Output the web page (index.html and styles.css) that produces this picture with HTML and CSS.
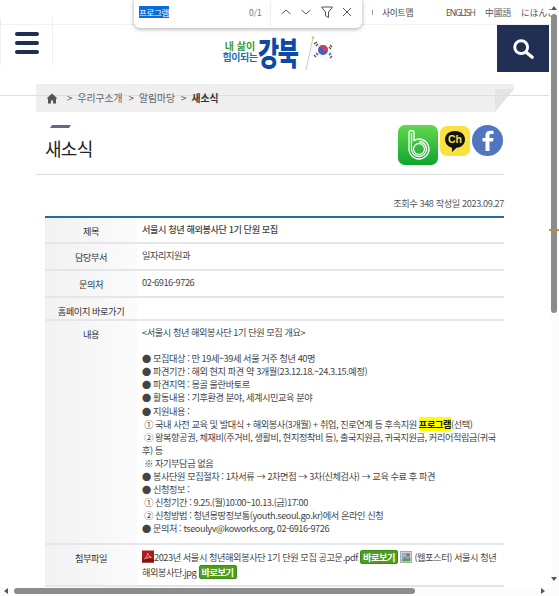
FILE: index.html
```html
<!DOCTYPE html>
<html lang="ko">
<head>
<meta charset="utf-8">
<title>새소식</title>
<link rel="stylesheet" href="styles.css">
</head>
<body>
<div class="page">
  <div class="topbar">
    <div class="topnav">
      <span class="sep"></span>
      <span class="sitemap">사이트맵</span>
      <span class="lang eng">ENGLISH</span>
      <span class="lang">中國語</span>
      <span class="lang">にほんご</span>
    </div>
  </div>
  <header class="header">
    <div class="menu-btn"><span></span><span></span><span></span></div>
    <div class="logo">
      <div class="logo-text">
        <span class="logo-top">내 삶이</span>
        <span class="logo-mid">힘이되는</span>
      </div>
      <span class="logo-big">강북</span>
      <svg class="flag" width="32" height="36" viewBox="0 0 32 36">
        <line x1="1" y1="35" x2="8" y2="3" stroke="#c9cdd2" stroke-width="1"/>
        <circle cx="8" cy="2.500" r="1.300" fill="#f0c040"/>
        <path d="M8 6 L30 16 L27 28 L5 20Z" fill="#f8f8fa"/>
        <circle cx="18" cy="15" r="5" fill="#4a5cc0"/>
        <path d="M13.500 13 A5 5 0 0 1 22 12 A2.500 2.500 0 0 1 18 15 A2.500 2.500 0 0 0 13.500 13Z" fill="#d8443c"/>
        <g stroke="#555" stroke-width="1.300">
          <path d="M9 9l3-2M11 11l2-2M25 10l2 2M24 12l2 2M9 20l2 2M11 18l2 2M24 20l2-2M25 23l2-2"/>
        </g>
      </svg>
    </div>
    <div class="search-btn">
      <svg width="22" height="22" viewBox="0 0 24 24"><circle cx="10" cy="10" r="7" fill="none" stroke="#fff" stroke-width="3.200"/><line x1="15.500" y1="15.500" x2="22" y2="21" stroke="#fff" stroke-width="3.600" stroke-linecap="round"/></svg>
    </div>
  </header>
  <div class="crumb-wrap">
    <nav class="crumb">
      <svg class="home" width="12" height="11" viewBox="0 0 12 11"><path d="M6 0.500 L0.500 5.500 H2 V10.500 H5 V7.500 H7 V10.500 H10 V5.500 H11.500Z" fill="#555"/></svg>
      <span class="gt">&gt;</span><span>우리구소개</span>
      <span class="gt">&gt;</span><span>알림마당</span>
      <span class="gt">&gt;</span><strong>새소식</strong>
    </nav>
    <div class="fold"></div>
  </div>
  <main class="content">
    <div class="title-row">
      <div class="title-box">
        <i class="title-mark"></i>
        <h1>새소식</h1>
      </div>
      <div class="social">
        <svg width="40" height="40" viewBox="0 0 40 40">
          <defs><linearGradient id="bg" x1="0" y1="0" x2="0" y2="1"><stop offset="0" stop-color="#62d84f"/><stop offset="1" stop-color="#0fa52c"/></linearGradient></defs>
          <rect width="40" height="40" rx="7" fill="url(#bg)"/>
          <path d="M11 8 V24 A10 10 0 1 0 21 14 A10 10 0 0 0 16 15.500 V8 A2.500 2.500 0 0 0 11 8Z" fill="none" stroke="#fff" stroke-width="1.300"/>
          <circle cx="21" cy="24" r="5.500" fill="none" stroke="#fff" stroke-width="1.300"/>
          <path d="M13.500 8 V24 A7.500 7.500 0 1 0 21 16.500" fill="none" stroke="#fff" stroke-width="1.300"/>
        </svg>
        <svg class="kakao" width="30" height="30" viewBox="0 0 30 30">
          <rect width="30" height="30" rx="7" fill="#f9e13f"/>
          <path d="M15 5 C8.500 5 5 9 5 13.500 C5 18 8.500 21 12 21.700 V26 L16.500 21.800 C21.500 21.500 25 18 25 13.500 C25 9 21.500 5 15 5Z" fill="#111"/>
          <text x="15" y="17" class="ch-text" text-anchor="middle">Ch</text>
        </svg>
        <svg width="31" height="31" viewBox="0 0 31 31">
          <circle cx="15.500" cy="15.500" r="15.500" fill="#5275c0"/>
          <path d="M17.500 26 V16.500 H21 L21.500 13 H17.500 V10.500 C17.500 9.500 18 9 19 9 H21.500 V5.800 H18.300 C15 5.800 13.500 7.500 13.500 10.500 V13 H10.500 V16.500 H13.500 V26Z" fill="#fff"/>
        </svg>
      </div>
    </div>
    <div class="meta">조회수 348 작성일 2023.09.27</div>
    <table class="board">
      <tr class="row-a"><th>제목</th><td class="subject">서울시 청년 해외봉사단 1기 단원 모집</td></tr>
      <tr class="row-b"><th>담당부서</th><td>일자리지원과</td></tr>
      <tr class="row-b"><th>문의처</th><td>02-6916-9726</td></tr>
      <tr class="row-c"><th>홈페이지 바로가기</th><td></td></tr>
      <tr>
        <th>내용</th>
        <td class="body-text">
          <p>&lt;서울시 청년 해외봉사단 1기 단원 모집 개요&gt;</p>
          <p>&nbsp;</p>
          <p>● 모집대상 : 만 19세~39세 서울 거주 청년 40명</p>
          <p>● 파견기간 : 해외 현지 파견 약 3개월(23.12.18.~24.3.15.예정)</p>
          <p>● 파견지역 : 몽골 울란바토르</p>
          <p>● 활동내용 : 기후환경 분야, 세계시민교육 분야</p>
          <p>● 지원내용 :</p>
          <p>&nbsp;① 국내 사전 교육 및 발대식 + 해외봉사(3개월) + 취업, 진로연계 등 후속지원 <mark>프로그램</mark>(선택)</p>
          <p>&nbsp;② 왕복항공권, 체재비(주거비, 생활비, 현지정착비 등), 출국지원금, 귀국지원금, 커리어적립금(귀국후) 등</p>
          <p>&nbsp;※ 자기부담금 없음</p>
          <p>● 봉사단원 모집절차 : 1차서류 → 2차면접 → 3차(신체검사) → 교육 수료 후 파견</p>
          <p>● 신청정보 :</p>
          <p>&nbsp;① 신청기간 : 9.25.(월)10:00~10.13.(금)17:00</p>
          <p>&nbsp;② 신청방법 : 청년몽땅정보통(youth.seoul.go.kr)에서 온라인 신청</p>
          <p>● 문의처 : tseoulyv@koworks.org, 02-6916-9726</p>
        </td>
      </tr>
      <tr class="row-f">
        <th>첨부파일</th>
        <td class="files">
          <svg class="ficon" width="12" height="13" viewBox="0 0 14 14"><rect width="14" height="14" fill="#a81c1a"/><rect y="10" width="14" height="4" fill="#7a1412"/><path d="M3 10 C5 8 7 5 6.500 3 C7 5 8.500 7 11 8 C8.500 7.500 5 8.500 3 10Z" fill="none" stroke="#f3d0cc" stroke-width="0.800"/></svg>2023년 서울시 청년해외봉사단 1기 단원 모집 공고문.pdf <a class="view">바로보기</a>
          <svg class="ficon" width="12" height="12" viewBox="0 0 14 14"><rect x="0.500" y="0.500" width="13" height="13" fill="#e3e6ea" stroke="#9aa0a8"/><rect x="2" y="2" width="10" height="10" fill="#7ea8dc"/><path d="M2 12 L6 7 L9 10 L12 7 V12Z" fill="#5a9a48"/><circle cx="5" cy="5" r="1.500" fill="#e8c040"/><rect x="8" y="3" width="3" height="3" fill="#d85040"/></svg>
          (웹포스터) 서울시 청년 해외봉사단.jpg <a class="view">바로보기</a>
        </td>
      </tr>
    </table>
  </main>
  <div class="findbar">
    <span class="find-q"><span class="find-sel">프로그램</span></span>
    <span class="find-count">0/1</span>
    <span class="find-div"></span>
    <span class="find-icons">
      <svg width="14" height="14" viewBox="0 0 14 14"><path d="M2.500 9 L7 5 L11.500 9" fill="none" stroke="#555" stroke-width="1"/></svg>
      <svg width="14" height="14" viewBox="0 0 14 14"><path d="M2.500 5 L7 9 L11.500 5" fill="none" stroke="#555" stroke-width="1"/></svg>
      <svg width="14" height="14" viewBox="0 0 14 14"><path d="M1.500 2 H12.500 L8.500 7 V12.500 L5.500 10.800 V7Z" fill="none" stroke="#555" stroke-width="1"/></svg>
      <svg width="14" height="14" viewBox="0 0 14 14"><path d="M3 3 L11 11 M11 3 L3 11" fill="none" stroke="#555" stroke-width="1"/></svg>
    </span>
  </div>
  <div class="vscroll">
    <span class="arrow-up"></span>
    <span class="vthumb"></span>
    <span class="vmark"></span>
    <span class="arrow-down"></span>
  </div>
  <div class="hscroll">
    <span class="arrow-left"></span>
    <span class="hthumb"></span>
    <span class="arrow-right"></span>
  </div>
</div>
</body>
</html>
```

FILE: styles.css
```css
* { box-sizing: border-box; }
html, body { margin: 0; padding: 0; overflow: hidden; }
body { font-family: "Noto Sans CJK KR", "Noto Sans", sans-serif; color: #444; background: #fff; }
p { margin: 0; }

.page { position: relative; width: 559px; height: 596px; overflow: hidden; }

.topbar { height: 25px; border-bottom: 1px solid #f1f1f1; }
.topnav { display: flex; align-items: center; height: 24px; padding-left: 372px; font-size: 8.700px; color: #555; white-space: nowrap; }
.sep { flex: none; width: 1px; height: 5px; background: #999; margin-right: 9px; }
.sitemap { flex: none; width: 31px; color: #444; margin-right: 33px; letter-spacing: -0.200px; }
.lang { flex: none; margin-right: 10px; }
.eng { width: 29px; font-size: 8.500px; letter-spacing: -1px; font-family: "Noto Sans", sans-serif; }

.header { position: relative; height: 47px; }
.menu-btn { width: 53px; height: 47px; margin-top: -7px; border-left: 1px solid #eee; border-right: 1px solid #eee; display: flex; flex-direction: column; gap: 5px; padding: 14px 0 0 14px; position: absolute; left: 0; top: 0; }
.menu-btn span { display: block; width: 24px; height: 4px; border-radius: 2px; background: #1e2d52; }
.logo { position: absolute; left: 222px; top: 10px; display: flex; align-items: flex-end; }
.logo-text { display: flex; flex-direction: column; align-items: center; width: 36px; line-height: 1.050; margin-bottom: 9px; }
.logo-top { font-size: 10px; color: #3e9a2e; font-weight: 700; }
.logo-mid { font-size: 10px; color: #1b6fb5; font-weight: 700; white-space: nowrap; letter-spacing: -0.500px; }
.logo-big { font-size: 23px; font-weight: 900; color: #0d4aa8; line-height: 34px; letter-spacing: -1.500px; transform: scaleY(1.400); transform-origin: 50% 70%; }
.flag { margin-left: 8px; }
.search-btn { position: absolute; right: 10px; top: 0; width: 52px; height: 47px; background: #212f52; display: flex; align-items: center; justify-content: center; }

.crumb-wrap { position: relative; margin: 12px 0 0 36px; width: 478px; height: 28px; }
.crumb-wrap::before { content: ""; position: absolute; inset: 0; background: #efefef; clip-path: polygon(0 0, 100% 0, 100% 18%, 96% 100%, 0 100%); }
.crumb-wrap::after { content: ""; position: absolute; left: -36px; top: 11px; width: 549px; height: 1px; background: #dedede; }
.crumb { position: relative; z-index: 1; display: flex; align-items: center; height: 28px; padding-left: 10px; font-size: 9.800px; color: #666; white-space: nowrap; }
.crumb strong { color: #333; font-weight: 700; }
.gt { margin: 0 5px 0 6px; }
.home { margin-right: 3px; }
.fold { position: absolute; right: 0; top: 5px; width: 19px; height: 23px; background: #e4e4e4; clip-path: polygon(0 0, 100% 0, 0 100%); }

.content { margin-left: 36px; width: 468px; }
.title-row { height: 63px; border-bottom: 1px solid #ddd; display: flex; justify-content: space-between; }
.title-box { padding: 13px 0 0 9px; }
.title-mark { display: block; width: 19px; height: 3px; margin-left: 6px; background: #5d6a8c; transform: skewX(-30deg); }
h1 { margin: 6px 0 0; font-size: 18px; line-height: 28px; font-weight: 400; color: #222; letter-spacing: -0.700px; }
.social { display: flex; align-items: flex-start; gap: 2px; padding-top: 13px; margin-right: 1px; }
.kakao { margin-top: 1px; }
.ch-text { font-family: "Liberation Sans", sans-serif; font-size: 10.500px; font-weight: 700; fill: #f9e13f; }

.meta { height: 41px; padding-top: 21px; margin-left: 9px; text-align: right; font-size: 9.200px; letter-spacing: -0.400px; color: #555; line-height: 14px; }

.board { margin-left: 9px; width: 459px; border-collapse: separate; border-spacing: 0; border-top: 2px solid #1f6ea6; table-layout: fixed; font-size: 9.200px; letter-spacing: -0.430px; line-height: 13.100px; }
.board th, .board td { border-bottom: 2px solid #e3e7ea; vertical-align: top; }
.board th { width: 92px; background: linear-gradient(to right, #f2f2f2, #fbfbfb); font-weight: 400; color: #333; padding: 7px 0 0; text-align: center; }
.board td { padding: 5px 6px 0 5px; color: #444; }
.board .body-text { padding-bottom: 7px; }
.row-a th { height: 26px; }
.row-b th { height: 27px; }
.row-c th { height: 23px; }
.row-f th { height: 42px; }
.subject { font-weight: 500; color: #333; }
mark { background: #ffff00; color: #111; font-weight: 700; }
.ficon { vertical-align: -2px; }
.view { display: inline-block; padding: 0 2px; height: 14px; line-height: 12px; font-weight: 700; color: #fff; background: #4b9e22; border: 1px solid #3c8c17; border-radius: 2px; }
.board .files { line-height: 15px; padding-top: 5px; }

.findbar { position: absolute; left: 134px; top: -1px; width: 228px; height: 29px; background: #fff; border-radius: 0 0 6px 6px; box-shadow: 0 1px 4px rgba(0,0,0,.35); display: flex; align-items: center; padding: 0 0 3px 5px; font-size: 8.500px; color: #555; z-index: 5; }
.find-q { width: 110px; letter-spacing: -0.300px; }
.find-sel { background: #0a6ed8; color: #fff; }
.find-count { font-size: 8.500px; color: #777; width: 21px; }
.find-div { width: 1px; height: 24px; margin-top: 3px; background: #eee; margin-right: 8px; }
.find-icons { display: flex; gap: 6.300px; }

.vscroll { position: absolute; right: 0; top: 0; width: 8px; height: 588px; background: #fcfcfc; z-index: 4; }
.vthumb { position: absolute; left: 0; top: 14px; width: 6px; height: 299px; background: #8c8c8c; border-radius: 3px; }
.vmark { position: absolute; left: -2px; top: 229px; width: 10px; height: 2px; background: #c88a30; }
.arrow-up { position: absolute; left: 0; top: 6px; border: 3px solid transparent; border-bottom: 4px solid #555; border-top: 0; }
.arrow-down { position: absolute; left: 0; top: 577px; border: 3px solid transparent; border-top: 4px solid #555; border-bottom: 0; }
.hscroll { position: absolute; left: 0; bottom: 0; width: 559px; height: 9px; background: #fcfcfc; z-index: 4; }
.hthumb { position: absolute; left: 14px; top: 1px; width: 401px; height: 6px; background: #8c8c8c; border-radius: 3px; }
.arrow-left { position: absolute; left: 4px; top: 1px; border: 3px solid transparent; border-right: 4px solid #555; border-left: 0; }
.arrow-right { position: absolute; left: 541px; top: 1px; border: 3px solid transparent; border-left: 4px solid #555; border-right: 0; }
```
